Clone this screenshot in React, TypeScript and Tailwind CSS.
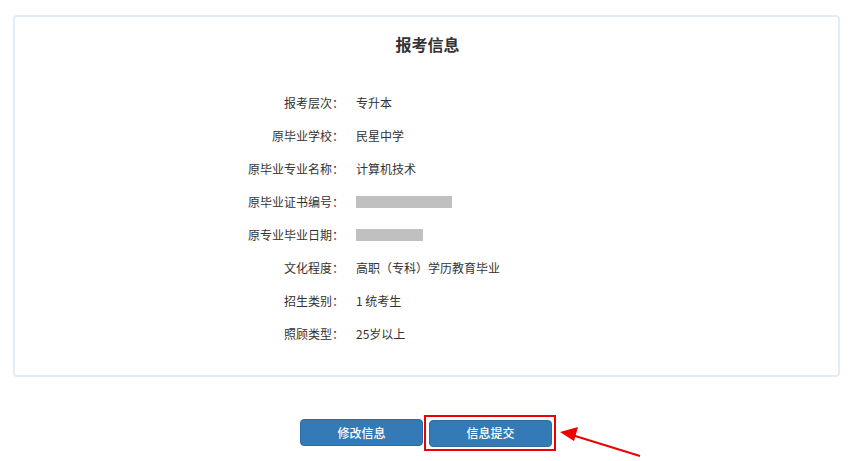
import React from "react";

const rows: { label: string; value?: string; bar?: number }[] = [
  { label: "报考层次：", value: "专升本" },
  { label: "原毕业学校：", value: "民星中学" },
  { label: "原毕业专业名称：", value: "计算机技术" },
  { label: "原毕业证书编号：", bar: 96 },
  { label: "原专业毕业日期：", bar: 67 },
  { label: "文化程度：", value: "高职（专科）学历教育毕业" },
  { label: "招生类别：", value: "1 统考生" },
  { label: "照顾类型：", value: "25岁以上" },
];

export default function App() {
  return (
    <div
      className="relative w-[860px] h-[461px] bg-white overflow-hidden text-[#333]"
      style={{ fontFamily: '"Noto Sans CJK SC", "Microsoft YaHei", sans-serif' }}
    >
      <div className="ml-[13px] mt-[15px] w-[827px] h-[362px] border-2 border-[#e2ecf8] rounded-[4px] pt-[15px]">
        <h1 className="text-center text-[16px] leading-[24px] font-bold text-[#333] pl-[2px]">报考信息</h1>
        <div className="mt-[30px] flex flex-col">
          {rows.map((r) => (
            <div key={r.label} className="flex items-center h-[33px] text-[12px]">
              <div className="w-[329px] text-right">{r.label}</div>
              <div className="ml-[12px]">
                {r.bar ? (
                  <div className="h-[12px] bg-[#c0c0c0]" style={{ width: r.bar }} />
                ) : (
                  r.value
                )}
              </div>
            </div>
          ))}
        </div>
      </div>
      <div className="mt-[42px] flex justify-center gap-[6px] pr-[8px]">
        <button className="w-[123px] h-[27px] bg-[#337ab7] text-white text-[12px] font-medium rounded-[4px] border border-[#2e6da4]">
          修改信息
        </button>
        <div className="relative">
          <button className="w-[123px] h-[27px] bg-[#337ab7] text-white text-[12px] font-medium rounded-[4px] border border-[#2e6da4]">
            信息提交
          </button>
          <span className="absolute -left-[5px] -right-[4px] -top-[4px] -bottom-[4px] border-2 border-[#ee0000] pointer-events-none" />
        </div>
      </div>
      <svg className="absolute left-0 top-0" width="860" height="461" viewBox="0 0 860 461">
        <line x1="640" y1="456" x2="572" y2="435" stroke="#ee0000" strokeWidth="2" />
        <polygon points="560,432 578,427 574,441" fill="#ee0000" />
      </svg>
    </div>
  );
}
